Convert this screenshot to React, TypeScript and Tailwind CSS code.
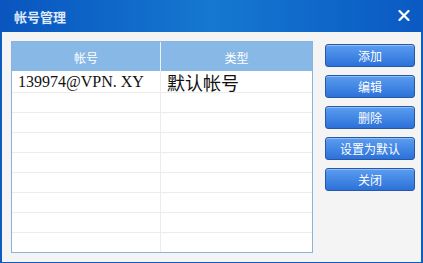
import React from "react";

const cjk = { fontFamily: '"Noto Sans CJK SC", "Noto Sans", sans-serif' };

function Btn({ label }: { label: string }) {
  return (
    <div
      className="h-[23px] w-[90px] rounded-[3px] border border-[#2658a8] bg-gradient-to-b from-[#5b9df0] to-[#2c71d9] flex items-center justify-center text-[12px] text-white leading-none shadow-[inset_0_1px_0_rgba(255,255,255,0.35)]"
      style={cjk}
    >
      {label}
    </div>
  );
}

export default function App() {
  const emptyRows = Array.from({ length: 8 });
  return (
    <div className="w-[423px] h-[263px] flex flex-col bg-[#0d5cc0] overflow-hidden">
      <div className="h-[32px] shrink-0 flex items-center justify-between pl-[14px] pr-[13px] bg-gradient-to-r from-[#0a55bf] via-[#1678d0] to-[#0b59c3]">
        <span className="text-[13px] font-bold text-[#dfe9f8] leading-none" style={cjk}>
          帐号管理
        </span>
        <svg width="12" height="11" viewBox="0 0 12 11" className="mt-[-2px]">
          <path d="M1.5 1 L10.5 10 M10.5 1 L1.5 10" stroke="#ffffff" strokeWidth="2.2" strokeLinecap="round" />
        </svg>
      </div>
      <div className="flex-1 mx-[2px] mb-[1px] bg-[#f4f4f4] flex pl-[9px] pt-[9px]">
        <div className="w-[302px] h-[212px] border border-[#8cb3dd] bg-white flex flex-col">
          <div className="h-[29px] shrink-0 flex bg-[#88b8e6] text-white text-[12px] leading-none" style={cjk}>
            <div className="w-[148px] flex items-center justify-center pt-[2px]">帐号</div>
            <div className="w-px bg-[#eaf2fb]" />
            <div className="flex-1 flex items-center justify-center pt-[2px]">类型</div>
          </div>
          <div className="h-[22px] shrink-0 flex border-b border-[#ececec]">
            <div className="w-[148px] pl-[6px] flex items-center text-[16px] text-[#111] leading-none" style={{ fontFamily: '"Liberation Serif", serif' }}>
              139974@VPN.&nbsp;XY
            </div>
            <div className="w-px bg-[#ececec]" />
            <div className="flex-1 pl-[6px] flex items-center text-[18px] text-[#111] leading-none" style={cjk}>
              默认帐号
            </div>
          </div>
          {emptyRows.map((_, i) => (
            <div
              key={i}
              className={"flex shrink-0 " + (i < 7 ? "h-[20px] border-b border-[#ececec]" : "flex-1")}
            >
              <div className="w-[148px]" />
              <div className="w-px bg-[#ececec]" />
              <div className="flex-1" />
            </div>
          ))}
        </div>
        <div className="ml-[12px] mt-[3px] flex flex-col gap-[8px]">
          <Btn label="添加" />
          <Btn label="编辑" />
          <Btn label="删除" />
          <Btn label="设置为默认" />
          <Btn label="关闭" />
        </div>
      </div>
    </div>
  );
}
